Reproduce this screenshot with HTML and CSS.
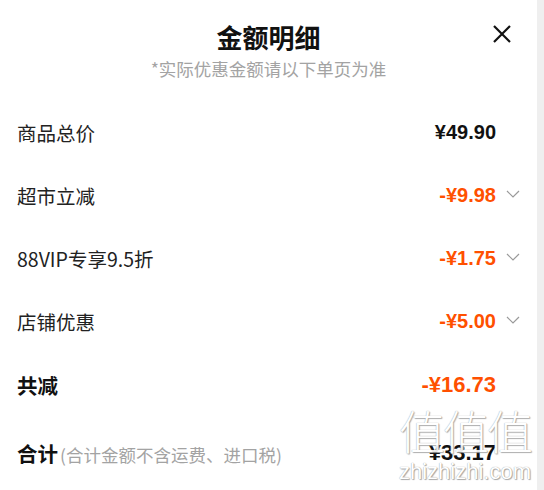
FILE: index.html
```html
<!DOCTYPE html>
<html lang="zh-CN">

<head>
    <meta charset="UTF-8">
    <meta name="viewport" content="width=device-width, initial-scale=1">
    <title>金额明细</title>
    <link rel="stylesheet" href="styles.css">
</head>

<body>
    <div class="sheet">
        <div class="sheet-header">
            <h1>金额明细</h1>
            <p class="tip">*实际优惠金额请以下单页为准</p>
            <span class="close">
                <svg width="20" height="20" viewBox="0 0 20 20">
                    <path d="M2 2 L18 18 M18 2 L2 18" stroke="#111" stroke-width="2.2" fill="none" />
                </svg>
            </span>
        </div>

        <div class="rows">
            <div class="row">
                <span class="label">商品总价</span>
                <span class="value">¥49.90</span>
                <span class="arrow"></span>
            </div>
            <div class="row">
                <span class="label">超市立减</span>
                <span class="value orange">-¥9.98</span>
                <span class="arrow">
                    <svg width="14" height="8" viewBox="0 0 14 8"><path d="M1 1 L7 7 L13 1" stroke="#9a9a9a" stroke-width="1.2" fill="none" /></svg>
                </span>
            </div>
            <div class="row">
                <span class="label">88VIP专享9.5折</span>
                <span class="value orange">-¥1.75</span>
                <span class="arrow">
                    <svg width="14" height="8" viewBox="0 0 14 8"><path d="M1 1 L7 7 L13 1" stroke="#9a9a9a" stroke-width="1.2" fill="none" /></svg>
                </span>
            </div>
            <div class="row">
                <span class="label">店铺优惠</span>
                <span class="value orange">-¥5.00</span>
                <span class="arrow">
                    <svg width="14" height="8" viewBox="0 0 14 8"><path d="M1 1 L7 7 L13 1" stroke="#9a9a9a" stroke-width="1.2" fill="none" /></svg>
                </span>
            </div>
            <div class="row">
                <span class="label strong">共减</span>
                <span class="value orange big">-¥16.73</span>
                <span class="arrow"></span>
            </div>
            <div class="row total">
                <span class="label strong">合计<small>(合计金额不含运费、进口税)</small></span>
                <span class="value big plain">¥33.17</span>
                <span class="arrow"></span>
            </div>
        </div>

        <!-- watermark from the source image -->
        <div class="watermark">
            <span class="wm-big">值值值</span>
            <span class="wm-small">zhizhizhi.com</span>
        </div>
    </div>
</body>

</html>
```

FILE: styles.css
```css
body {
    margin: 0;
    padding: 0;
    background: #efefef;
    font-family: "Noto Sans CJK SC", "Liberation Sans", sans-serif;
}

.sheet {
    position: relative;
    width: 537px;
    height: 490px;
    background: #fff;
    overflow: hidden;
}

.sheet-header {
    position: relative;
    text-align: center;
    padding-top: 21px;
}

.sheet-header h1 {
    margin: 0;
    font-size: 26px;
    line-height: 32px;
    font-weight: bold;
    color: #111;
}

.tip {
    margin: 5px 0 0;
    font-size: 17.5px;
    line-height: 22px;
    color: #a3a3a3;
}

.close {
    position: absolute;
    top: 24px;
    right: 25px;
    width: 20px;
    height: 20px;
}

.rows {
    margin-top: 21px;
}

.row {
    display: flex;
    align-items: center;
    height: 63px;
    padding: 0 13px 0 17px;
}

.row.total {
    height: 67px;
    padding-top: 6px;
    box-sizing: border-box;
}

.label {
    flex: 1;
    font-size: 19.5px;
    color: #222;
}

.label.strong {
    font-size: 20.5px;
    font-weight: bold;
    color: #111;
}

.label small {
    font-size: 17.5px;
    font-weight: normal;
    color: #a3a3a3;
    margin-left: 2px;
}

.value {
    font-family: "Liberation Sans", sans-serif;
    font-weight: bold;
    font-size: 20px;
    color: #111;
}

.value.big {
    font-size: 22px;
}

.orange {
    color: #ff5000;
}

.arrow {
    width: 28px;
    display: flex;
    justify-content: flex-end;
    padding-right: 4px;
    box-sizing: border-box;
}

.arrow svg {
    display: block;
    margin-top: -4px;
}

.watermark {
    position: absolute;
    left: 394px;
    top: 399px;
    width: 142px;
    text-align: center;
    color: #fff;
    white-space: nowrap;
    pointer-events: none;
}

.wm-big {
    display: block;
    font-size: 46px;
    line-height: 60px;
    letter-spacing: -2px;
    font-weight: 300;
    text-shadow: 0 0 1px #888, 1px 1px 1px #aaa;
    opacity: 0.9;
}

.wm-small {
    display: block;
    font-family: "Liberation Sans", sans-serif;
    font-size: 22px;
    line-height: 26px;
    text-shadow: 0 0 1px #888, 1px 1px 1px #aaa;
}
```
